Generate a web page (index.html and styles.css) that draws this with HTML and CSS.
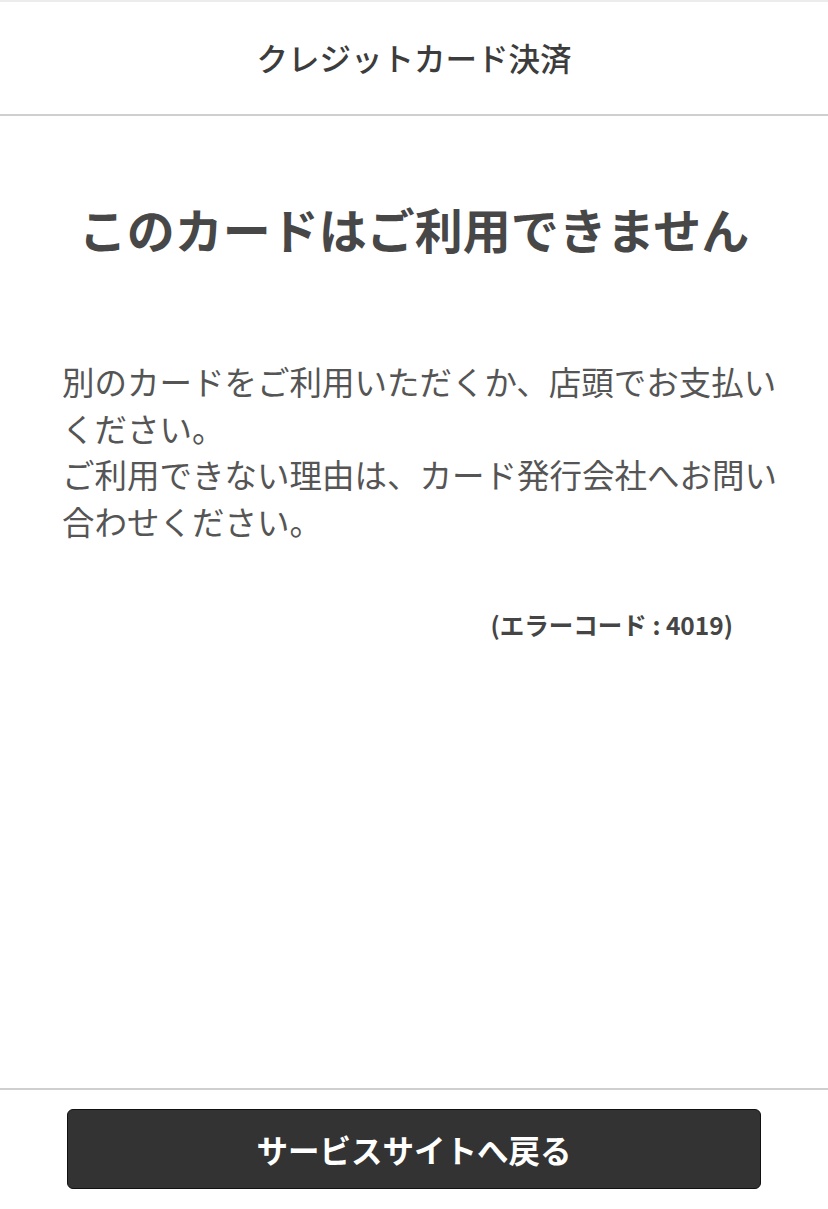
FILE: index.html
```html
<!DOCTYPE html>
<html lang="ja">
<head>
<meta charset="utf-8">
<link rel="stylesheet" href="styles.css">
</head>
<body>
<div class="page">
  <header class="header">
    <h1 class="header-title">クレジットカード決済</h1>
  </header>
  <main class="main">
    <h2 class="title">このカードはご利用できません</h2>
    <p class="message">別のカードをご利用いただくか、店頭でお支払いください。<br>ご利用できない理由は、カード発行会社へお問い合わせください。</p>
    <p class="code">(エラーコード : 4019)</p>
  </main>
  <footer class="footer">
    <button class="back-btn" type="button">サービスサイトへ戻る</button>
  </footer>
</div>
</body>
</html>
```

FILE: styles.css
```css
html, body {
  margin: 0;
  padding: 0;
  background: #ffffff;
}
body {
  font-family: "Noto Sans CJK JP", "Noto Sans", sans-serif;
  color: #444444;
}
.page {
  display: flex;
  flex-direction: column;
  height: 1209px;
  box-sizing: border-box;
  border-top: 2px solid #ececec;
}
.header {
  height: 112px;
  display: flex;
  align-items: center;
  justify-content: center;
  border-bottom: 2px solid #cfcfcf;
}
.header-title {
  margin: 0;
  font-size: 31.5px;
  font-weight: 500;
  color: #3c3c3c;
  line-height: 1;
}
.main {
  flex: 1;
}
.title {
  margin: 79px 0 0;
  font-size: 48px;
  line-height: 66px;
  font-weight: 700;
  text-align: center;
  color: #474747;
}
.message {
  margin: 97px 51px 0 62px;
  font-size: 32.5px;
  line-height: 46.5px;
  font-weight: 400;
  color: #555555;
}
.code {
  margin: 64px 95px 0 0;
  text-align: right;
  font-size: 24.5px;
  line-height: 34px;
  font-weight: 700;
  color: #454545;
}
.footer {
  border-top: 2px solid #cfcfcf;
  padding: 19px 67px 20px;
}
.back-btn {
  display: block;
  width: 100%;
  height: 80px;
  background: #333333;
  border: 1px solid #111111;
  border-radius: 6px;
  color: #ffffff;
  font-family: "Noto Sans CJK JP", "Noto Sans", sans-serif;
  font-size: 31.5px;
  font-weight: 700;
  padding: 0;
}
```
